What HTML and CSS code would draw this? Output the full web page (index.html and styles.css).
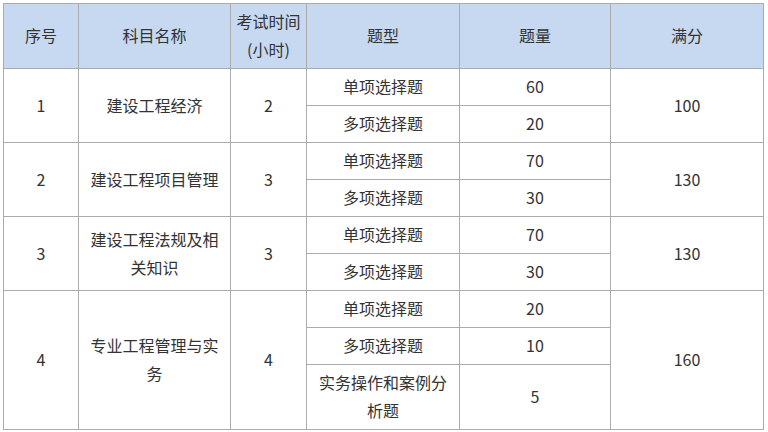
FILE: index.html
```html
<!DOCTYPE html>
<html lang="zh-CN">
<head>
<meta charset="utf-8">
<link rel="stylesheet" href="styles.css">
</head>
<body>
<table class="exam">
  <colgroup>
    <col class="c1"><col class="c2"><col class="c3"><col class="c4"><col class="c5"><col class="c6">
  </colgroup>
  <thead>
    <tr class="head">
      <th>序号</th>
      <th>科目名称</th>
      <th>考试时间<br>(小时)</th>
      <th>题型</th>
      <th>题量</th>
      <th>满分</th>
    </tr>
  </thead>
  <tbody>
    <tr class="sub">
      <td rowspan="2">1</td>
      <td rowspan="2">建设工程经济</td>
      <td rowspan="2">2</td>
      <td>单项选择题</td>
      <td>60</td>
      <td rowspan="2">100</td>
    </tr>
    <tr class="sub">
      <td>多项选择题</td>
      <td>20</td>
    </tr>
    <tr class="sub">
      <td rowspan="2">2</td>
      <td rowspan="2">建设工程项目管理</td>
      <td rowspan="2">3</td>
      <td>单项选择题</td>
      <td>70</td>
      <td rowspan="2">130</td>
    </tr>
    <tr class="sub">
      <td>多项选择题</td>
      <td>30</td>
    </tr>
    <tr class="sub">
      <td rowspan="2">3</td>
      <td rowspan="2">建设工程法规及相关知识</td>
      <td rowspan="2">3</td>
      <td>单项选择题</td>
      <td>70</td>
      <td rowspan="2">130</td>
    </tr>
    <tr class="sub">
      <td>多项选择题</td>
      <td>30</td>
    </tr>
    <tr class="sub">
      <td rowspan="3">4</td>
      <td rowspan="3">专业工程管理与实务</td>
      <td rowspan="3">4</td>
      <td>单项选择题</td>
      <td>20</td>
      <td rowspan="3">160</td>
    </tr>
    <tr class="sub">
      <td>多项选择题</td>
      <td>10</td>
    </tr>
    <tr class="tall">
      <td>实务操作和案例分析题</td>
      <td>5</td>
    </tr>
  </tbody>
</table>
</body>
</html>
```

FILE: styles.css
```css
html, body {
  margin: 0;
  padding: 0;
  background: #ffffff;
}

body {
  padding: 3px 0 0 3px;
  font-family: "Noto Sans CJK SC", "Noto Sans", sans-serif;
  color: #333333;
  font-size: 16px;
}

.exam {
  border-collapse: collapse;
  table-layout: fixed;
  width: 760px;
}

.c1 { width: 75px; }
.c2 { width: 152px; }
.c3 { width: 76px; }
.c4 { width: 153px; }
.c5 { width: 151px; }
.c6 { width: 153px; }

.exam th,
.exam td {
  border: 1px solid #ababab;
  text-align: center;
  vertical-align: middle;
  font-weight: normal;
  line-height: 28px;
  padding: 0 8px 2px;
  box-sizing: border-box;
}

.exam th {
  background: #c6d9f1;
  padding: 0 4px 2px;
}

.head { height: 65px; }
.sub { height: 37px; }
.tall { height: 65px; }
```
